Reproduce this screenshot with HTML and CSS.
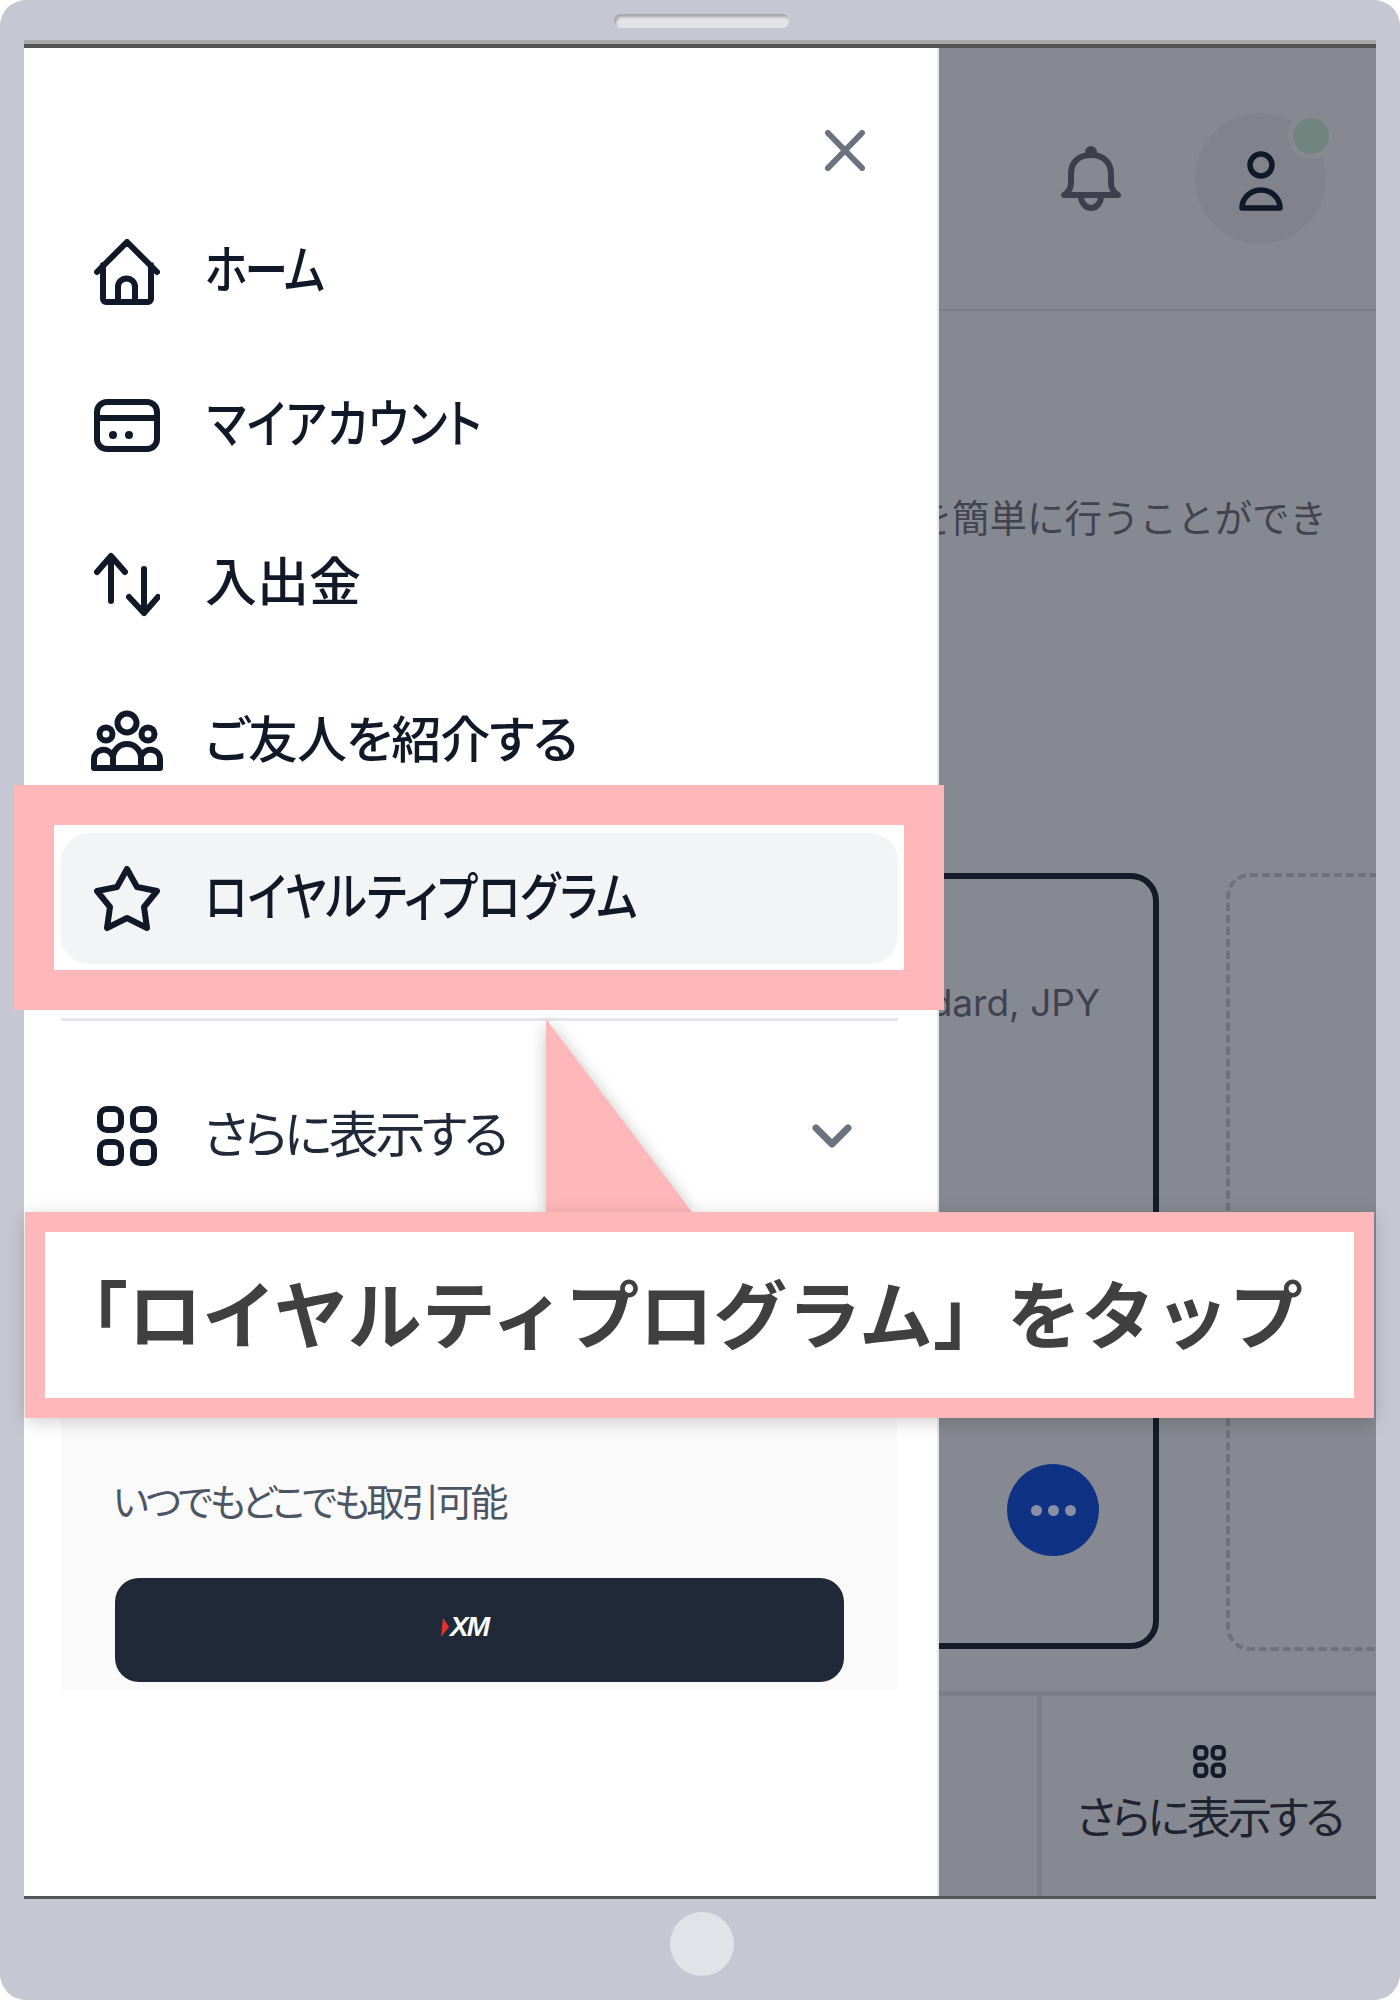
FILE: index.html
```html
<!DOCTYPE html>
<html lang="ja">
<head>
    <meta charset="UTF-8">
    <title>ロイヤルティプログラム</title>
    <link rel="stylesheet" href="styles.css">
</head>
<body>
    <div class="device">
        <div class="speaker"></div>

        <div class="screen">
            <!-- Side menu -->
            <aside class="drawer">
                <div class="drawer-top">
                    <svg class="close-icon" viewBox="0 0 40 41"><path d="M3 3L37 38M37 3L3 38"/></svg>
                </div>

                <nav class="menu">
                    <a class="menu-row menu-home">
                        <svg class="menu-icon" viewBox="0 0 66 66"><path d="M3 33L33 3L63 33M9 26V60a3 3 0 0 0 3 3H54a3 3 0 0 0 3-3V26M24 62V48a8.500 8.500 0 0 1 17 0V62"/></svg>
                        <span class="menu-label label-kana label-home">ホーム</span>
                    </a>
                    <a class="menu-row">
                        <svg class="menu-icon" viewBox="0 0 66 66"><rect x="3" y="9" width="60" height="47" rx="10"/><path d="M3 25H63"/><circle class="dot" cx="19" cy="42" r="4"/><circle class="dot" cx="35" cy="42" r="4"/></svg>
                        <span class="menu-label label-kana label-account">マイアカウント</span>
                    </a>
                    <a class="menu-row">
                        <svg class="menu-icon" viewBox="0 0 66 66"><path d="M17 50V6M3 21L17 5L31 21M50 18V62M35 46L50 62L64 46"/></svg>
                        <span class="menu-label label-kanji">入出金</span>
                    </a>
                    <a class="menu-row">
                        <svg class="menu-icon menu-icon-wide" viewBox="0 0 72 66"><circle cx="36" cy="15" r="9.500"/><circle cx="15" cy="26" r="6.500"/><circle cx="57" cy="26" r="6.500"/><path d="M3 60V51a9.500 9.500 0 0 1 18-4M69 60V51a9.500 9.500 0 0 0-18-4M22 60V50a14 14 0 0 1 28 0V60M3 60H69"/></svg>
                        <span class="menu-label">ご友人を紹介する</span>
                    </a>
                    <a class="menu-row menu-active">
                        <svg class="menu-icon" viewBox="0 0 66 66"><path d="M33 3L43 21L63 25L50 41L53 62L33 52L13 62L16 41L3 25L23 21Z"/></svg>
                        <span class="menu-label label-kana">ロイヤルティプログラム</span>
                    </a>
                </nav>

                <div class="menu-divider"></div>

                <a class="menu-row menu-more">
                    <svg class="menu-icon" viewBox="0 0 66 66"><rect x="6" y="6" width="21" height="21" rx="7"/><rect x="39" y="6" width="21" height="21" rx="7"/><rect x="6" y="39" width="21" height="21" rx="7"/><rect x="39" y="39" width="21" height="21" rx="7"/></svg>
                    <span class="menu-label label-light">さらに表示する</span>
                    <svg class="chevron" viewBox="0 0 40 24"><path d="M4 4L20 20L36 4"/></svg>
                </a>

                <div class="app-box">
                    <p class="app-text">いつでもどこでも取引可能</p>
                    <div class="app-button">
                        <svg class="xm-arrow" viewBox="0 0 8 19"><path d="M2 0L8 9L0 19Z"/></svg>
                        <span class="xm-text">XM</span>
                    </div>
                </div>
            </aside>

            <!-- Dimmed page behind the menu -->
            <div class="backdrop">
                <header class="page-header">
                    <svg class="bell" viewBox="0 0 60 66"><path d="M3 49H57C52 46 50 42 50 37V28C50 16 42 9 30 9C18 9 10 16 10 28V37C10 42 8 46 3 49ZM20 50a10 12 0 0 0 20 0"/><circle cx="30" cy="6" r="3"/></svg>
                    <div class="avatar">
                        <svg class="person" viewBox="0 0 46 62"><circle cx="23" cy="15" r="11"/><path d="M4 58a19 18 0 0 1 38 0Z"/></svg>
                        <span class="status-dot"></span>
                    </div>
                </header>
                <main class="page-main">
                    <p class="intro">取引を簡単に行うことができ</p>
                    <div class="cards">
                        <div class="card">
                            <p class="card-title">Standard, JPY</p>
                            <span class="more-btn"><i></i><i></i><i></i></span>
                        </div>
                        <div class="card-add"></div>
                    </div>
                </main>
                <footer class="tabbar">
                    <div class="tab"></div>
                    <div class="tab tab-more">
                        <svg class="tab-icon" viewBox="0 0 66 66"><rect x="6" y="6" width="21" height="21" rx="7"/><rect x="39" y="6" width="21" height="21" rx="7"/><rect x="6" y="39" width="21" height="21" rx="7"/><rect x="39" y="39" width="21" height="21" rx="7"/></svg>
                        <span class="tab-label">さらに表示する</span>
                    </div>
                </footer>
            </div>
        </div>

        <div class="home-button"></div>

        <!-- Annotation on top of the screenshot -->
        <div class="highlight"></div>
        <svg class="callout-tail" viewBox="0 0 146 193"><polygon points="0,0 146,193 0,193"/></svg>
        <div class="callout">「ロイヤルティプログラム」をタップ</div>
    </div>
</body>
</html>
```

FILE: styles.css
```css
body {
    margin: 0;
    background-color: #fff;
    font-family: "Noto Sans CJK JP", "Noto Sans", sans-serif;
}

p {
    margin: 0;
}

.device {
    position: relative;
    width: 1400px;
    height: 2000px;
    box-sizing: border-box;
    padding-top: 44px;
    background-color: #c7c7d3;
    border-radius: 26px;
    display: flex;
    flex-direction: column;
    align-items: center;
}

.speaker {
    position: absolute;
    top: 14px;
    left: 614px;
    width: 175px;
    height: 14px;
    background-color: #e4e4e6;
    border-radius: 6px;
    box-shadow: inset 2px 3px 3px #a5a5aa;
}

.screen {
    width: 1352px;
    height: 1855px;
    box-sizing: border-box;
    border-top: 4px solid #555;
    border-bottom: 3px solid #555;
    display: flex;
    box-shadow: 0 -4px 0 0 #aaa;
}

/* drawer */
.drawer {
    width: 915px;
    flex-shrink: 0;
    box-sizing: border-box;
    border-right: 2px solid #e5e7eb;
    background-color: #fff;
    display: flex;
    flex-direction: column;
}

.drawer-top {
    height: 158px;
    box-sizing: border-box;
    padding: 82px 72px 0 0;
    display: flex;
    justify-content: flex-end;
}

.close-icon {
    width: 40px;
    height: 41px;
    fill: none;
    stroke: #6b7280;
    stroke-width: 6;
    stroke-linecap: round;
}

.menu {
    display: flex;
    flex-direction: column;
    gap: 26.500px;
}

.menu-row {
    height: 131px;
    margin: 0 39px 0 37px;
    padding-left: 33px;
    border-radius: 28px;
    display: flex;
    align-items: center;
    color: #111827;
}

.menu-home {
    margin-bottom: -3px;
}

.menu-active {
    background-color: #f3f4f6;
}

.menu-icon {
    width: 66px;
    height: 66px;
    flex-shrink: 0;
    margin-right: 45px;
    fill: none;
    stroke: #111827;
    stroke-width: 6;
    stroke-linecap: round;
    stroke-linejoin: round;
}

.menu-icon .dot {
    fill: #111827;
    stroke: none;
}

.menu-icon-wide {
    width: 72px;
    margin-left: -3px;
    margin-right: 42px;
}

.menu-label {
    margin-top: -10px;
    font-size: 50px;
    line-height: 60px;
    font-weight: 500;
    font-feature-settings: "palt";
    letter-spacing: -1px;
    white-space: nowrap;
}

/* the screenshot's kana are narrower than Noto's */
.label-kana {
    font-size: 52px;
    letter-spacing: 0;
    transform: scaleX(0.84);
    transform-origin: left center;
}

.label-home {
    letter-spacing: -3px;
}

.label-account {
    margin-left: 2px;
    letter-spacing: 0.8px;
}

.label-kanji {
    font-size: 52px;
    letter-spacing: 0;
}

.label-light {
    margin-left: -2px;
    font-weight: 400;
    color: #1f2937;
    letter-spacing: -3.400px;
}

.menu-divider {
    height: 3px;
    margin: 54px 39px 49px 37px;
    background-color: #e5e7ef;
}

.chevron {
    width: 40px;
    height: 24px;
    margin-left: auto;
    margin-right: 46px;
    fill: none;
    stroke: #6b7280;
    stroke-width: 7;
    stroke-linecap: round;
    stroke-linejoin: round;
}

.app-box {
    margin: 20px 40px 0 37px;
    height: 469px;
    box-sizing: border-box;
    padding: 0 53px 8px 54px;
    background-color: #fafafa;
    display: flex;
    flex-direction: column;
    justify-content: flex-end;
}

.app-text {
    margin-left: -2px;
    margin-bottom: 53px;
    font-size: 38px;
    line-height: 50px;
    color: #4b5563;
    font-feature-settings: "palt";
    letter-spacing: -3.300px;
}

.app-button {
    height: 104px;
    box-sizing: border-box;
    padding: 0 30px 6px 0;
    background-color: #202938;
    border-radius: 24px;
    display: flex;
    align-items: center;
    justify-content: center;
    gap: 1px;
}

.xm-arrow {
    width: 8px;
    height: 19px;
    fill: #e8322f;
}

.xm-text {
    font-family: "Liberation Sans", sans-serif;
    font-size: 28px;
    line-height: 20px;
    font-weight: bold;
    font-style: italic;
    letter-spacing: -2px;
    color: #fff;
}

/* page behind */
.backdrop {
    flex: 1;
    min-width: 0;
    overflow: hidden;
    background-color: #878992;
    display: flex;
    flex-direction: column;
    color: #3f4350;
}

.page-header {
    height: 263px;
    flex-shrink: 0;
    box-sizing: border-box;
    border-bottom: 2px solid #7b7e89;
    padding-right: 50px;
    display: flex;
    justify-content: flex-end;
    align-items: center;
    gap: 74px;
}

.bell {
    width: 60px;
    height: 66px;
    fill: none;
    stroke: #3d404c;
    stroke-width: 6;
    stroke-linejoin: round;
}

.avatar {
    position: relative;
    width: 131px;
    height: 131px;
    border-radius: 50%;
    background-color: #80828c;
    display: flex;
    align-items: center;
    justify-content: center;
}

.person {
    width: 46px;
    height: 62px;
    margin-top: 4px;
    fill: none;
    stroke: #111827;
    stroke-width: 5.500;
    stroke-linejoin: round;
}

.status-dot {
    position: absolute;
    top: 0;
    right: -8px;
    width: 36px;
    height: 36px;
    border-radius: 50%;
    background-color: #71857f;
    border: 5px solid #878992;
}

.page-main {
    flex: 1;
    min-height: 0;
    display: flex;
    flex-direction: column;
}

.intro {
    margin-top: 175px;
    padding-right: 49px;
    display: flex;
    justify-content: flex-end;
    white-space: nowrap;
    font-size: 37.500px;
    line-height: 60px;
    color: #41444f;
}

.cards {
    margin: 327px 0 0 -300px;
    display: flex;
    gap: 67px;
}

.card {
    width: 520px;
    height: 776px;
    flex-shrink: 0;
    box-sizing: border-box;
    border: 6px solid #171a29;
    border-radius: 28px;
    display: flex;
    flex-direction: column;
    align-items: flex-end;
}

.card-title {
    margin-top: 101px;
    margin-right: 53px;
    font-family: Inter, "Noto Sans", sans-serif;
    font-size: 37px;
    line-height: 46px;
    white-space: nowrap;
}

.more-btn {
    margin-top: auto;
    margin-bottom: 87px;
    margin-right: 54px;
    width: 92px;
    height: 92px;
    border-radius: 50%;
    background-color: #0f3285;
    display: flex;
    align-items: center;
    justify-content: center;
    gap: 6px;
}

.more-btn i {
    width: 11px;
    height: 11px;
    border-radius: 50%;
    background-color: #8a8fa6;
}

.card-add {
    width: 400px;
    height: 778px;
    flex-shrink: 0;
    box-sizing: border-box;
    border: 4px dashed #6f717b;
    border-radius: 24px;
}

.tabbar {
    height: 205px;
    flex-shrink: 0;
    box-sizing: border-box;
    border-top: 5px solid #7b7e89;
    display: flex;
}

.tab {
    width: 98px;
    border-right: 5px solid #7b7e89;
}

.tab-more {
    flex: 1;
    border-right: none;
    padding-top: 48px;
    display: flex;
    flex-direction: column;
    align-items: center;
}

.tab-icon {
    width: 35px;
    height: 35px;
    fill: none;
    stroke: #171a29;
    stroke-width: 8;
}

.tab-label {
    margin-top: 8px;
    font-size: 44px;
    line-height: 56px;
    color: #1f2430;
    font-feature-settings: "palt";
    letter-spacing: -3px;
    white-space: nowrap;
}

.home-button {
    position: absolute;
    left: 670px;
    top: 1912px;
    width: 64px;
    height: 64px;
    border-radius: 50%;
    background-color: #e2e3e8;
}

/* annotation */
.highlight {
    position: absolute;
    left: 14px;
    top: 785px;
    width: 930px;
    height: 225px;
    box-sizing: border-box;
    border: 40px solid #ffb8b9;
}

.callout-tail {
    position: absolute;
    left: 546px;
    top: 1019px;
    width: 146px;
    height: 193px;
    fill: #ffb8b9;
    filter: drop-shadow(0 2px 8px rgba(0, 0, 0, 0.25));
}

.callout {
    position: absolute;
    left: 25px;
    top: 1212px;
    width: 1349px;
    height: 206px;
    box-sizing: border-box;
    border: 20px solid #ffb8b9;
    background-color: #fff;
    box-shadow: 0 4px 18px rgba(0, 0, 0, 0.18);
    display: flex;
    align-items: center;
    padding: 0 0 10px 9px;
    font-size: 74px;
    font-weight: 700;
    color: #404040;
    white-space: nowrap;
}
```
